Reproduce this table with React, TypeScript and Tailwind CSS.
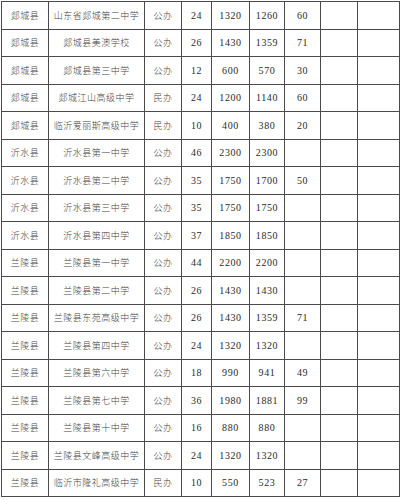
const rows: string[][] = [
  ['郯城县', '山东省郯城第二中学', '公办', '24', '1320', '1260', '60'],
  ['郯城县', '郯城县美澳学校', '公办', '26', '1430', '1359', '71'],
  ['郯城县', '郯城县第三中学', '公办', '12', '600', '570', '30'],
  ['郯城县', '郯城江山高级中学', '民办', '24', '1200', '1140', '60'],
  ['郯城县', '临沂爱丽斯高级中学', '民办', '10', '400', '380', '20'],
  ['沂水县', '沂水县第一中学', '公办', '46', '2300', '2300', ''],
  ['沂水县', '沂水县第二中学', '公办', '35', '1750', '1700', '50'],
  ['沂水县', '沂水县第三中学', '公办', '35', '1750', '1750', ''],
  ['沂水县', '沂水县第四中学', '公办', '37', '1850', '1850', ''],
  ['兰陵县', '兰陵县第一中学', '公办', '44', '2200', '2200', ''],
  ['兰陵县', '兰陵县第二中学', '公办', '26', '1430', '1430', ''],
  ['兰陵县', '兰陵县东苑高级中学', '公办', '26', '1430', '1359', '71'],
  ['兰陵县', '兰陵县第四中学', '公办', '24', '1320', '1320', ''],
  ['兰陵县', '兰陵县第六中学', '公办', '18', '990', '941', '49'],
  ['兰陵县', '兰陵县第七中学', '公办', '36', '1980', '1881', '99'],
  ['兰陵县', '兰陵县第十中学', '公办', '16', '880', '880', ''],
  ['兰陵县', '兰陵县文峰高级中学', '公办', '24', '1320', '1320', ''],
  ['兰陵县', '临沂市隆礼高级中学', '民办', '10', '550', '523', '27'],
];

const cjk = "font-['Noto_Sans_CJK_SC',sans-serif] text-[9px] tracking-[0.5px] font-light text-[#444]";
const num = "font-['Liberation_Serif',serif] text-[10px] tracking-[0.6px] text-[#2a2a2a]";

export default function App() {
  return (
    <div className="h-[500px] w-[402px] bg-white">
      <div className="ml-px mt-px grid w-fit grid-cols-[46px_95px_36px_29px_37px_34px_35px_36px_41px] auto-rows-[26.5px] gap-px bg-[#4a4a4a] p-px">
        {rows.map((r, i) => (
          <div key={i} className="contents">
            {r.map((c, j) => (
              <div
                key={j}
                className={`flex items-center justify-center bg-white ${j < 3 ? cjk : num}`}
              >
                {c}
              </div>
            ))}
            <div className="bg-white" />
            <div className="bg-white" />
          </div>
        ))}
      </div>
    </div>
  );
}
